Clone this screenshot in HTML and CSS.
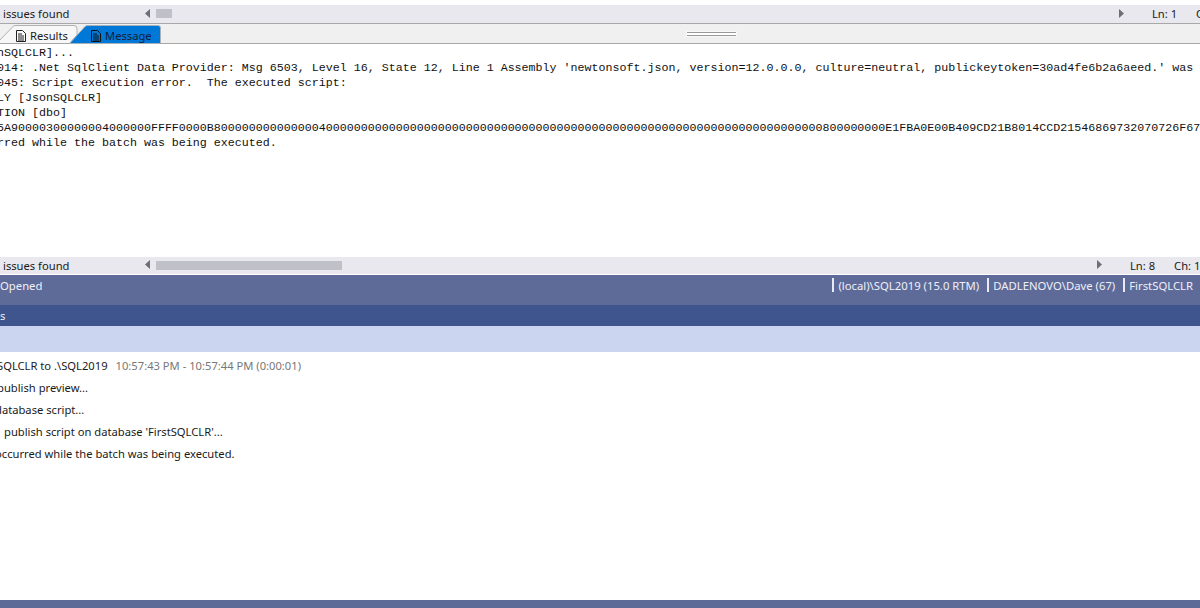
FILE: index.html
```html
<!DOCTYPE html>
<html lang="en">
<head>
<meta charset="utf-8">
<title>Publish output</title>
<link rel="stylesheet" href="styles.css">
</head>
<body>
<div class="app">
  <div class="topgap"></div>
  <div class="status status-top">
    <span class="issues">issues found</span>
    <div class="scroll">
      <svg class="arrow" width="6" height="10" viewBox="0 0 6 10"><path d="M5 0v9L0 4.500z"/></svg>
      <div class="track"><div class="thumb thumb-short"></div></div>
      <svg class="arrow" width="6" height="10" viewBox="0 0 6 10"><path d="M0 0v9l5-4.500z"/></svg>
    </div>
    <span class="ln">Ln: 1</span>
    <span class="ch">Ch</span>
  </div>
  <div class="tabbar">
    <div class="tab tab-results">
      <svg class="tabshape" width="80" height="20" viewBox="0 0 80 20"><path d="M-3 19 13 2.500Q14 1.500 16 1.500H74Q77 1.500 77 4.500V11L70 19" fill="#f7f7f7" stroke="#b0b0b0"/></svg>
      <svg class="doc" width="10" height="12" viewBox="0 0 10 12"><path d="M.5.500h6l3 3v8h-9zM2 4h4M2 6h6M2 8h6M2 10h6" fill="none" stroke="#222"/></svg>
      <span class="tablabel">Results</span>
    </div>
    <div class="tab tab-message">
      <svg class="tabshape" width="94" height="20" viewBox="0 0 94 20"><path d="M1.500 19.500 17 2.500Q18 1.500 20 1.500H90Q92.500 1.500 92.500 4V19.500Z" fill="#0078d7" stroke="#a8b0b8"/></svg>
      <svg class="doc" width="10" height="12" viewBox="0 0 10 12"><path d="M.5.500h6l3 3v8h-9zM2 4h4M2 6h6M2 8h6M2 10h6" fill="none" stroke="#111"/></svg>
      <span class="tablabel">Message</span>
    </div>
    <div class="grip"></div>
  </div>
  <pre class="log">nSQLCLR]...
014: .Net SqlClient Data Provider: Msg 6503, Level 16, State 12, Line 1 Assembly 'newtonsoft.json, version=12.0.0.0, culture=neutral, publickeytoken=30ad4fe6b2a6aeed.' was
045: Script execution error.  The executed script:
LY [JsonSQLCLR]
TION [dbo]
5A90000300000004000000FFFF0000B800000000000000400000000000000000000000000000000000000000000000000000000000000000000000800000000E1FBA0E00B409CD21B8014CCD21546869732070726F6772616D
rred while the batch was being executed.</pre>
  <div class="status status-bottom">
    <span class="issues">issues found</span>
    <div class="scroll scroll-bottom">
      <svg class="arrow" width="6" height="10" viewBox="0 0 6 10"><path d="M5 0v9L0 4.500z"/></svg>
      <div class="track"><div class="thumb thumb-long"></div></div>
      <svg class="arrow" width="6" height="10" viewBox="0 0 6 10"><path d="M0 0v9l5-4.500z"/></svg>
    </div>
    <span class="ln">Ln: 8</span>
    <span class="ch">Ch: 1</span>
  </div>
  <div class="connbar">
    <span class="opened">Opened</span>
    <div class="conn">
      <span class="conn-item">(local)\SQL2019 (15.0 RTM)</span>
      <span class="conn-item">DADLENOVO\Dave (67)</span>
      <span class="conn-item">FirstSQLCLR</span>
    </div>
  </div>
  <div class="panelhead">s</div>
  <div class="toolband"></div>
  <div class="output">
    <div class="out-line out-first">SQLCLR to .\SQL2019<span class="time">10:57:43 PM - 10:57:44 PM (0:00:01)</span></div>
    <div class="out-line out-preview">publish preview...</div>
    <div class="out-line out-db">database script...</div>
    <div class="out-line out-exec">publish script on database 'FirstSQLCLR'...</div>
    <div class="out-line out-err">occurred while the batch was being executed.</div>
  </div>
  <div class="footer"></div>
</div>
</body>
</html>
```
FILE: styles.css
```css
* { box-sizing: border-box; }
html, body { margin: 0; padding: 0; }
body { width: 1200px; height: 608px; overflow: hidden; background: #fff; font-family: "Noto Sans", "Open Sans", sans-serif; font-size: 11.200px; color: #1a1a1a; }
.app { display: flex; flex-direction: column; height: 608px; overflow: hidden; }
.topgap { height: 5px; flex: none; }
.status { display: flex; align-items: center; flex: none; background: #e8e8ee; height: 18px; padding: 0 0 1px 3px; white-space: nowrap; }
.status-bottom { height: 17px; }
.issues { width: 142px; flex: none; }
.scroll { display: flex; align-items: center; width: 980px; flex: none; }
.scroll-bottom { width: 958px; }
.arrow { flex: none; fill: #6e6e78; }
.track { flex: 1; padding: 0 5px; }
.thumb { height: 9px; background: #bfc0c8; }
.thumb-short { width: 16px; }
.thumb-long { width: 186px; }
.ln { flex: none; margin-left: 27px; }
.ch { flex: none; margin-left: 19px; }
.tabbar { position: relative; flex: none; height: 21px; background: #f0f0f0; border-top: 1px solid #a8a8a8; border-bottom: 1px solid #a6a6a6; display: flex; align-items: flex-start; }
.tab { position: relative; display: flex; align-items: center; gap: 4px; height: 20px; padding-top: 3px; font-size: 11.200px; flex: none; }
.tabshape { position: absolute; left: 0; top: 0; }
.doc { position: relative; flex: none; }
.tablabel { position: relative; }
.tab-results { width: 68px; padding-left: 16px; }
.tab-message { width: 94px; padding-left: 23px; color: #10213a; }
.grip { position: absolute; left: 687px; top: 8px; width: 49px; height: 4px; border-top: 1px solid #999; border-bottom: 1px solid #999; background: #fff; box-shadow: 0 0 0 1px #f8f8f8; }
.log { flex: none; height: 213px; margin: 0 0 0 -3px; padding: 2px 0 0; overflow: hidden; font-family: "Liberation Mono", "Courier New", monospace; font-size: 11.670px; line-height: 15px; color: #111; }
.connbar { flex: none; height: 30px; margin-top: 1px; background: #5e6a98; color: #eef0f8; display: flex; justify-content: space-between; padding-top: 3px; font-size: 11.300px; }
.opened { line-height: 15px; }
.conn { display: flex; gap: 8px; padding-right: 7px; }
.conn-item { line-height: 15px; border-left: 2px solid #e8eaf4; padding-left: 4px; height: 14px; }
.panelhead { flex: none; height: 21px; background: #3f558d; color: #eef0f8; line-height: 21px; }
.toolband { flex: none; height: 26px; background: #cbd5ef; }
.output { flex: 1; padding-top: 3px; overflow: hidden; }
.out-line { height: 22px; line-height: 22px; white-space: nowrap; color: #1a1a1a; }
.out-first { margin-left: -3px; }
.out-preview { margin-left: -3px; }
.out-db { margin-left: -5px; }
.out-exec { margin-left: 4px; }
.out-err { margin-left: -5px; }
.time { margin-left: 8px; color: #777; }
.footer { flex: none; height: 8px; background: #5f6b97; }
```
